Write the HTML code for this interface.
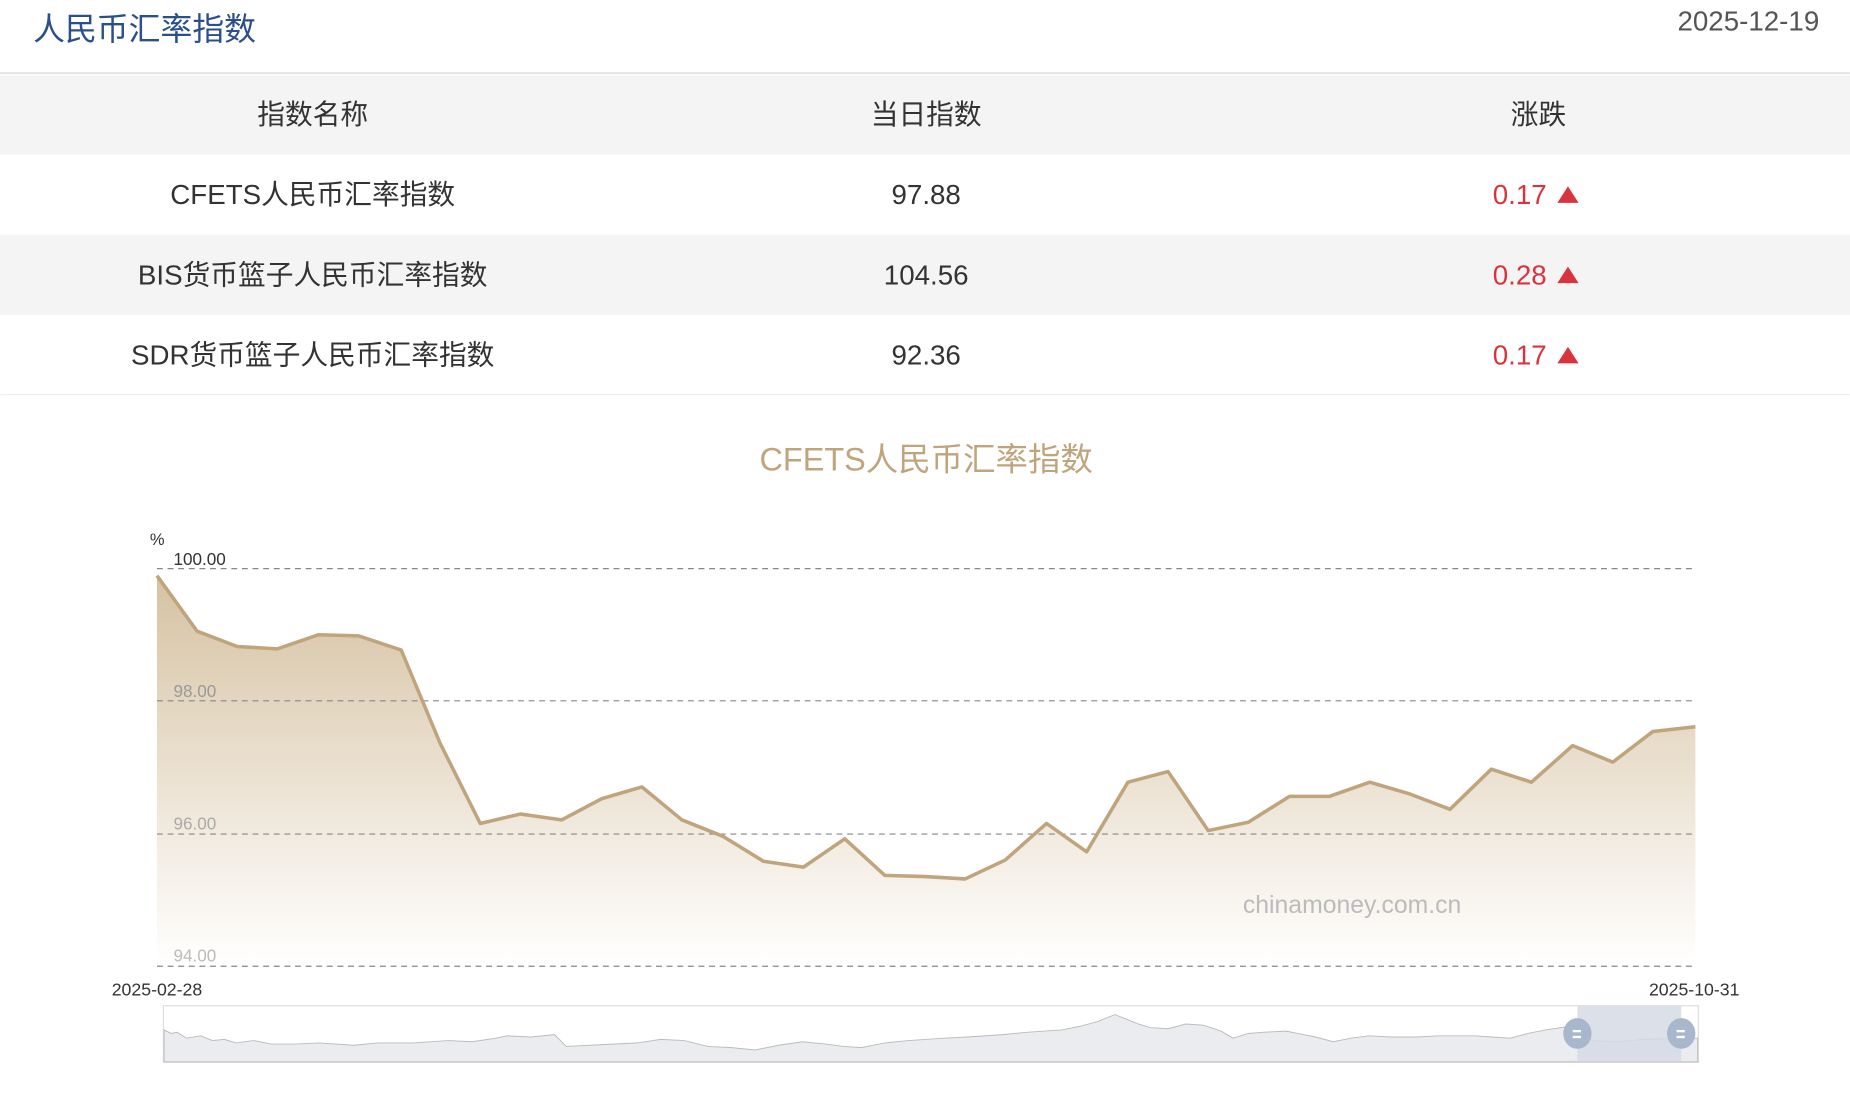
<!DOCTYPE html>
<html><head><meta charset="utf-8"><style>
html,body{margin:0;padding:0;background:#fff;width:1850px;height:1096px;overflow:hidden}
svg{display:block}
text{font-family:"Liberation Sans","Noto Sans CJK SC",sans-serif}
</style></head><body>
<svg width="1850" height="1096" viewBox="0 0 1568 929" xmlns="http://www.w3.org/2000/svg">
<defs>
<linearGradient id="g" x1="0" y1="0" x2="0" y2="1">
<stop offset="0" stop-color="#d6c2a2"/>
<stop offset="1" stop-color="#ffffff"/>
</linearGradient>
</defs>
<text x="28" y="34" font-size="27" fill="#2a4f8a">人民币汇率指数</text>
<text x="1542" y="26" font-size="23.5" fill="#555" text-anchor="end">2025-12-19</text>
<rect x="0" y="61" width="1568" height="2" fill="#e6e6e6"/>
<rect x="0" y="64" width="1568" height="67" fill="#f4f4f4"/>
<rect x="0" y="199" width="1568" height="68" fill="#f4f4f4"/>
<rect x="0" y="334" width="1568" height="1" fill="#eee"/>
<g font-size="23.5" fill="#333" text-anchor="middle">
<text x="265" y="105">指数名称</text><text x="785" y="105">当日指数</text><text x="1304" y="105">涨跌</text>
<text x="265" y="173">CFETS人民币汇率指数</text><text x="785" y="173">97.88</text>
<text x="265" y="241">BIS货币篮子人民币汇率指数</text><text x="785" y="241">104.56</text>
<text x="265" y="309">SDR货币篮子人民币汇率指数</text><text x="785" y="309">92.36</text>
</g>
<g font-size="23.5" fill="#d9343d" text-anchor="end">
<text x="1311" y="173">0.17</text><text x="1311" y="241">0.28</text><text x="1311" y="309">0.17</text>
</g>
<g fill="#d9343d">
<polygon points="1320,172 1338,172 1329,158"/>
<polygon points="1320,240 1338,240 1329,226"/>
<polygon points="1320,308 1338,308 1329,294"/>
</g>
<text x="785" y="399" font-size="27.5" fill="#c0a47c" text-anchor="middle">CFETS人民币汇率指数</text>
<text x="127" y="462" font-size="14" fill="#333">%</text>
<path d="M133,488 167,535 201,548 235,550 270,538 304,539 340,551 373,630 407,698 441,690 476,695 510,677 544,667 578,695 613,709 647,730 681,735 716,711 750,742 784,743 818,745 852,729 887,698 921,722 956,663 990,654 1024,704 1058,697 1093,675 1127,675 1161,663 1195,673 1229,686 1264,652 1298,663 1333,632 1367,646 1401,620 1437,616 L1437,819 133,819Z" fill="url(#g)"/>
<g stroke="#888" stroke-dasharray="5,4" stroke-width="1">
<line x1="133" y1="482" x2="1437" y2="482"/><line x1="133" y1="594" x2="1437" y2="594"/>
<line x1="133" y1="707" x2="1437" y2="707"/><line x1="133" y1="819" x2="1437" y2="819"/>
</g>
<g font-size="14.5">
<text x="147" y="479" fill="#333">100.00</text>
<text x="147" y="591" fill="#999">98.00</text>
<text x="147" y="703" fill="#aaa">96.00</text>
<text x="147" y="815" fill="#bbb">94.00</text>
</g>
<path d="M133,488 167,535 201,548 235,550 270,538 304,539 340,551 373,630 407,698 441,690 476,695 510,677 544,667 578,695 613,709 647,730 681,735 716,711 750,742 784,743 818,745 852,729 887,698 921,722 956,663 990,654 1024,704 1058,697 1093,675 1127,675 1161,663 1195,673 1229,686 1264,652 1298,663 1333,632 1367,646 1401,620 1437,616" fill="none" stroke="#c0a47c" stroke-width="3" stroke-linejoin="round"/>
<text x="1146" y="774" font-size="21" fill="#bbb" text-anchor="middle">chinamoney.com.cn</text>
<g font-size="15" fill="#333" text-anchor="middle">
<text x="133" y="844">2025-02-28</text><text x="1436" y="844">2025-10-31</text>
</g>
<rect x="138.5" y="852.5" width="1301" height="48" fill="#fff" stroke="#ddd"/>
<path d="M139,873 145,876 150,875 158,880 170,878 180,882 190,881 200,884 215,882 230,885 250,885 270,884 300,886 320,884 350,884 380,882 400,883 420,880 430,878 450,879 470,877 480,887 500,886 540,884 560,881 580,882 600,887 620,888 640,890 660,886 680,883 700,885 715,887 730,888 750,884 770,882 800,880 820,879 850,877 870,875 900,873 915,870 930,866 945,860 955,864 965,868 975,871 990,872 1005,868 1020,869 1035,874 1045,880 1058,876 1070,875 1090,874 1100,876 1115,879 1130,883 1145,880 1160,878 1180,879 1200,879 1220,878 1250,878 1265,879 1280,880 1295,876 1310,873 1330,870 1350,882 1370,883 1395,881 1420,880 1439,880 L1439,900 139,900Z" fill="#ebecef" stroke="#bbb" stroke-width="0.8"/>
<rect x="1337" y="853" width="88" height="47" fill="#d5dbe5" opacity="0.85"/>
<g fill="#a7b7cc"><ellipse cx="1337" cy="876" rx="12" ry="13"/><ellipse cx="1425" cy="876" rx="12" ry="13"/></g>
<g fill="#fff"><rect x="1333" y="873" width="7" height="2"/><rect x="1333" y="878" width="7" height="2"/><rect x="1421" y="873" width="7" height="2"/><rect x="1421" y="878" width="7" height="2"/></g>
</svg>
</body></html>
